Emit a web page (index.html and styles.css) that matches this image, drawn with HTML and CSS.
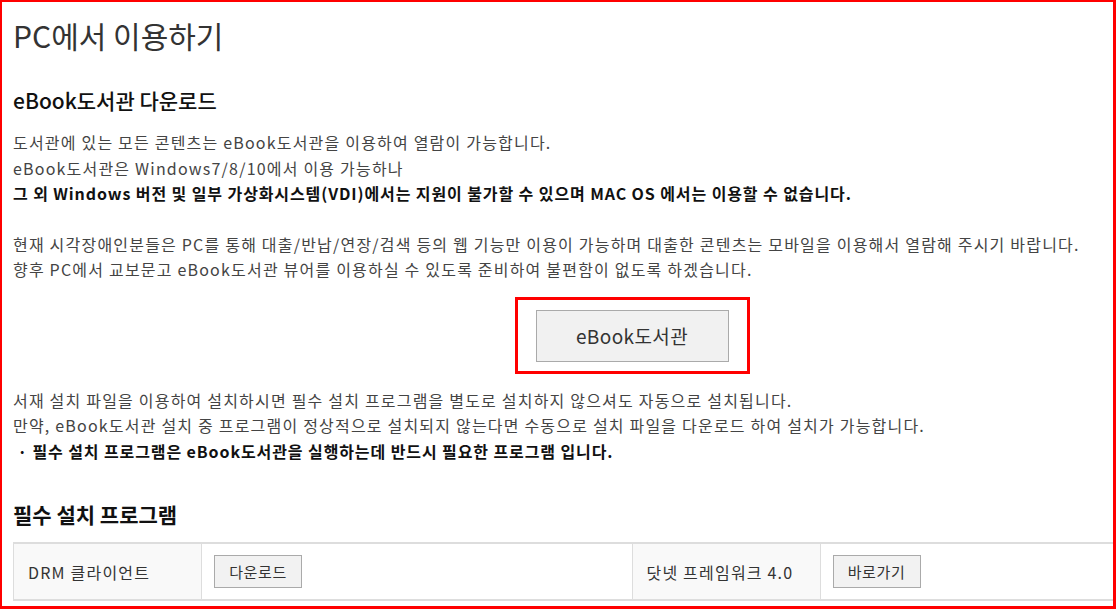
FILE: index.html
```html
<html>
<head>
<title>PC에서 이용하기</title>
<meta charset="utf-8">
<link rel="stylesheet" href="styles.css">
</head>
<body>

<div class="page">

<h1>PC에서 이용하기</h1>

<h2>eBook도서관 다운로드</h2>

<p>도서관에 있는 모든 콘텐츠는 eBook도서관을 이용하여 열람이 가능합니다.<br>
eBook도서관은 Windows7/8/10에서 이용 가능하나<br>
<strong>그 외 Windows 버전 및 일부 가상화시스템(VDI)에서는 지원이 불가할 수 있으며 MAC OS 에서는 이용할 수 없습니다.</strong></p>

<p>현재 시각장애인분들은 PC를 통해 대출/반납/연장/검색 등의 웹 기능만 이용이 가능하며 대출한 콘텐츠는 모바일을 이용해서 열람해 주시기 바랍니다.<br>
향후 PC에서 교보문고 eBook도서관 뷰어를 이용하실 수 있도록 준비하여 불편함이 없도록 하겠습니다.</p>

<div class="launch">
  <div class="launch-mark">
    <button class="launch-btn">eBook도서관</button>
  </div>
</div>

<p class="after">서재 설치 파일을 이용하여 설치하시면 필수 설치 프로그램을 별도로 설치하지 않으셔도 자동으로 설치됩니다.<br>
만약, eBook도서관 설치 중 프로그램이 정상적으로 설치되지 않는다면 수동으로 설치 파일을 다운로드 하여 설치가 가능합니다.<br>
<strong>&nbsp;· 필수 설치 프로그램은 eBook도서관을 실행하는데 반드시 필요한 프로그램 입니다.</strong></p>

<h3>필수 설치 프로그램</h3>

<table class="programs">
  <tr>
    <th>DRM 클라이언트</th>
    <td><button class="small-btn">다운로드</button></td>
    <th>닷넷 프레임워크 4.0</th>
    <td><button class="small-btn">바로가기</button></td>
  </tr>
</table>

</div>

<div class="frame"></div>

</body>
</html>
```

FILE: styles.css
```css
body {
  margin: 0;
  overflow: hidden;
  font-family: "Noto Sans CJK KR", "Noto Sans", sans-serif;
  color: #444;
  background: #fff;
}

/* red marker round the whole shot */
.frame {
  position: fixed;
  top: 0;
  left: 0;
  right: 0;
  bottom: 0;
  border-style: solid;
  border-color: #f00;
  border-width: 2px 3px 3px 2px;
  pointer-events: none;
}

.page {
  width: 1238px;
  padding: 15px 0 0 13px;
}

h1 {
  margin: 0;
  font-size: 30px;
  line-height: 40px;
  font-weight: 400;
  color: #333;
}

h2 {
  margin: 31px 0 0;
  font-size: 21px;
  line-height: 28px;
  font-weight: 500;
  color: #111;
}

p {
  margin: 16px 0 0;
  font-size: 16px;
  line-height: 25.5px;
  letter-spacing: 1.2px;
}

p + p {
  margin-top: 25px;
}

p strong {
  color: #111;
  font-weight: 700;
  letter-spacing: 0.9px;
}

.launch {
  display: flex;
  justify-content: center;
  margin-top: 14px;
}

.launch-mark {
  border: 3px solid #f00;
  padding: 10px 18px 9px;
}

.launch-btn {
  width: 193px;
  height: 52px;
  background: #f1f1f1;
  border: 1px solid #aaa;
  font-family: inherit;
  font-size: 19px;
  letter-spacing: 0.4px;
  color: #333;
}

p.after {
  margin-top: 14px;
}

h3 {
  margin: 36px 0 0;
  font-size: 21px;
  line-height: 28px;
  font-weight: 700;
  color: #111;
}

.programs {
  width: 1238px;
  margin-top: 14px;
  border-collapse: collapse;
  border-top: 2px solid #ddd;
  border-bottom: 2px solid #ddd;
  table-layout: fixed;
}

.programs th,
.programs td {
  height: 57px;
  box-sizing: border-box;
  border: 1px solid #ddd;
  border-top: 0;
  border-bottom: 0;
  padding: 0 12px;
  font-size: 16px;
  letter-spacing: 1.2px;
  color: #333;
  text-align: left;
}

.programs th {
  width: 188px;
  padding-left: 14px;
  background: #f9f9f9;
  font-weight: 400;
}

.small-btn {
  width: 88px;
  height: 33px;
  background: #f2f2f2;
  border: 1px solid #aaa;
  font-family: inherit;
  font-size: 15px;
  letter-spacing: 0.6px;
  color: #333;
  padding: 0;
}
```
